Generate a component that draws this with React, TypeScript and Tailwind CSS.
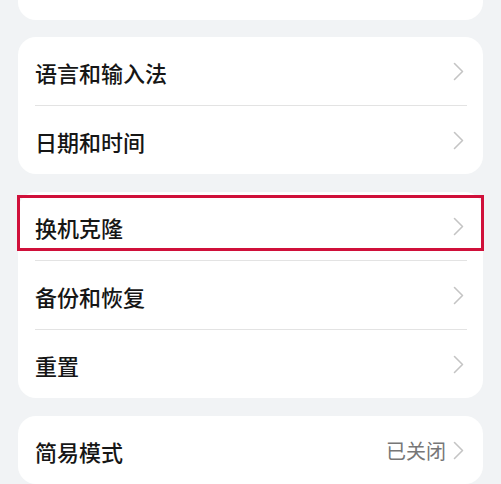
import React from "react";

const Chevron = () => (
  <svg width="11" height="19" viewBox="0 0 11 19" fill="none" className="shrink-0">
    <polyline points="1.5,1.5 9.5,9.5 1.5,17.5" stroke="#c4c4c4" strokeWidth="1.6" strokeLinecap="round" strokeLinejoin="round" />
  </svg>
);

const Row = ({ label, value, highlight }: { label: string; value?: string; highlight?: boolean }) => (
  <div className="relative h-[68px] flex items-center pl-[17px] pr-[19px]">
    <span className="flex-1 text-[22px] font-medium leading-none text-[#161616] pt-[2px]">{label}</span>
    {value && <span className="text-[20px] leading-none text-[#777777] mr-[7px] pt-[1px]">{value}</span>}
    <Chevron />
    {highlight && (
      <div className="absolute left-[-1px] right-[-1px] top-[3px] h-[56px] border-[3px] border-[#d0103a]" />
    )}
  </div>
);

const Divider = () => <div className="h-px bg-[#e3e3e3] ml-[17px] mr-[16px]" />;

export default function App() {
  return (
    <div
      className="w-[501px] h-[484px] overflow-hidden bg-[#f1f3f5] px-[18px] flex flex-col gap-[18px]"
      style={{ fontFamily: '"Noto Sans CJK SC", "Noto Sans", sans-serif' }}
    >
      <div className="h-[20px] shrink-0 bg-white rounded-b-[18px]" />
      <div className="shrink-0 bg-white rounded-[18px] -mt-[1px]">
        <Row label="语言和输入法" />
        <Divider />
        <Row label="日期和时间" />
      </div>
      <div className="shrink-0 bg-white rounded-[18px]">
        <Row label="换机克隆" highlight />
        <Divider />
        <Row label="备份和恢复" />
        <Divider />
        <Row label="重置" />
      </div>
      <div className="shrink-0 bg-white rounded-[18px]">
        <Row label="简易模式" value="已关闭" />
      </div>
    </div>
  );
}
